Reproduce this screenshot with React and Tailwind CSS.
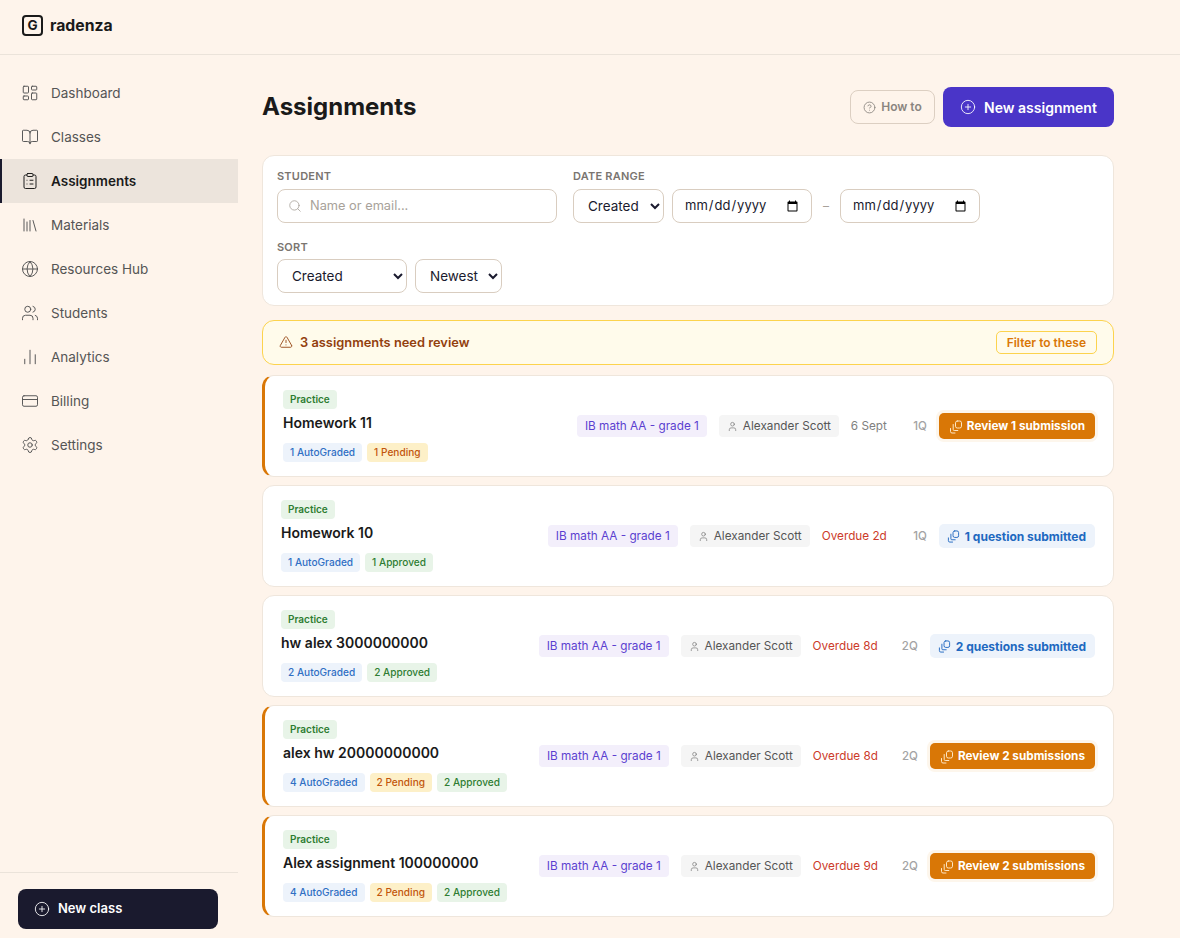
import React from 'react';
import {
  LayoutDashboard, BookOpen, ClipboardList, Library, Globe, Users, ChartNoAxesColumn,
  CreditCard, Settings, CirclePlus, CircleHelp, Search, TriangleAlert, User,
} from 'lucide-react';

const NAV = [
  ['Dashboard', LayoutDashboard],
  ['Classes', BookOpen],
  ['Assignments', ClipboardList],
  ['Materials', Library],
  ['Resources Hub', Globe],
  ['Students', Users],
  ['Analytics', ChartNoAxesColumn],
  ['Billing', CreditCard],
  ['Settings', Settings],
];

const ROWS = [
  { title: 'Homework 11', chips: [['1 AutoGraded', 'blue'], ['1 Pending', 'amber']], date: '6 Sept', overdue: false, q: '1Q', review: 'Review 1 submission' },
  { title: 'Homework 10', chips: [['1 AutoGraded', 'blue'], ['1 Approved', 'green']], date: 'Overdue 2d', overdue: true, q: '1Q', submitted: '1 question submitted' },
  { title: 'hw alex 3000000000', chips: [['2 AutoGraded', 'blue'], ['2 Approved', 'green']], date: 'Overdue 8d', overdue: true, q: '2Q', submitted: '2 questions submitted' },
  { title: 'alex hw 20000000000', chips: [['4 AutoGraded', 'blue'], ['2 Pending', 'amber'], ['2 Approved', 'green']], date: 'Overdue 8d', overdue: true, q: '2Q', review: 'Review 2 submissions' },
  { title: 'Alex assignment 100000000', chips: [['4 AutoGraded', 'blue'], ['2 Pending', 'amber'], ['2 Approved', 'green']], date: 'Overdue 9d', overdue: true, q: '2Q', review: 'Review 2 submissions' },
];

const CHIP = {
  blue: 'bg-[#edf3fb] text-[#2f6fc4]',
  amber: 'bg-[#fdf0c8] text-[#c2560c]',
  green: 'bg-[#e8f4e8] text-[#2e7d32]',
};

function SubmitIcon({ className }) {
  return (
    <svg viewBox="0 0 14 14" fill="none" stroke="currentColor" strokeWidth="1" strokeLinecap="round" strokeLinejoin="round" className={className}>
      <rect x="6.5" y="1" width="6" height="7" rx="1.8" />
      <path d="M4.2 4.5v5a1 1 0 0 0 1 1h3.6" />
      <path d="M1.5 8.5v3a1.5 1.5 0 0 0 1.5 1.5h3" />
    </svg>
  );
}

function Row({ row }) {
  return (
    <div className={`flex items-center justify-between bg-white rounded-xl border border-[#efe6dc] h-[102px] pl-[18px] pr-[18px] ${row.review ? 'border-l-[3px] border-l-[#d97706]' : ''}`}>
      <div>
        <span className="block w-fit rounded-[4px] bg-[#e8f4e8] text-[#2e7d32] text-[10px] font-semibold leading-[19px] px-[7px]">Practice</span>
        <div className="text-[14px] font-semibold text-[#1a1a1a] leading-[20px] mt-[4px]">{row.title}</div>
        <div className="flex gap-[5px] mt-[10px]">
          {row.chips.map(([label, tone]) => (
            <span key={label} className={`rounded-[4px] text-[10.1px] font-medium leading-[19px] px-[7px] ${CHIP[tone]}`}>{label}</span>
          ))}
        </div>
      </div>
      <div className="flex items-center gap-3">
        <span className="rounded-[4px] bg-[#f3effb] text-[#5b3fd0] text-[11.75px] leading-[22px] px-2">IB math AA - grade 1</span>
        <span className="flex items-center gap-[5px] rounded-[4px] bg-[#f5f5f5] text-[#555555] text-[11.75px] leading-[22px] px-2">
          <User size={11} strokeWidth={1.5} className="text-[#777777]" />
          Alexander Scott
        </span>
        <span className={`pt-px text-[11.75px] ${row.overdue ? 'text-[#cc3b2a]' : 'text-[#808080]'}`}>{row.date}</span>
        <span className="pt-px w-[28px] text-right text-[11.5px] font-medium text-[#a3a3a3]">{row.q}</span>
        {row.review ? (
          <button className="flex items-center gap-[4px] h-[26px] rounded-[5px] bg-[#d97706] text-white text-[11.75px] font-bold px-[10px] pt-px shadow-[0_0_0_3px_#fdf6ec]">
            <SubmitIcon className="size-[14px] text-[#fde6c4]" />
            {row.review}
          </button>
        ) : (
          <span className="flex items-center gap-[5px] h-[24px] rounded-[5px] bg-[#edf3fb] text-[#2068c0] text-[12px] font-bold pl-[8px] pr-[9px] pt-px">
            <SubmitIcon className="size-[13px]" />
            {row.submitted}
          </span>
        )}
      </div>
    </div>
  );
}

export default function App() {
  const field = 'h-[34px] rounded-lg border border-[#d9cdc0] bg-white text-[#1a1a2e]';
  return (
    <div className="h-[938px] overflow-hidden bg-[#fef4eb] flex flex-col font-['Inter',sans-serif]">
      <header className="h-[55px] shrink-0 border-b border-[#ebe3da] flex items-center pl-[22px] pb-[3px] gap-[7px]">
        <span className="size-[21px] flex items-center justify-center rounded-[4px] border-2 border-[#1a1a1a] text-[13.5px] font-bold text-[#1a1a1a]">G</span>
        <span className="text-[15.75px] font-bold text-[#1a1a1a]">radenza</span>
      </header>
      <div className="flex flex-1 min-h-0">
        <aside className="w-[238px] shrink-0 flex flex-col pt-4">
          <nav className="flex-1">
            {NAV.map(([label, Icon]) => {
              const active = label === 'Assignments';
              return (
                <div key={label} className={`relative h-[44px] flex items-center gap-[12px] pl-[21px] text-[13.5px] ${active ? 'bg-[#ece4dc] font-semibold text-[#1a1a1a]' : 'text-[#555555]'}`}>
                  {active && <span className="absolute left-0 inset-y-0 w-[2px] bg-[#1a1a2e]" />}
                  <Icon size={18} strokeWidth={1.3} />
                  {label}
                </div>
              );
            })}
          </nav>
          <div className="border-t border-[#ebe3da] h-[66px] pl-[18px] pt-4">
            <button className="w-[200px] h-[40px] flex items-center gap-2 rounded-lg bg-[#1a1a2e] text-white text-[13px] font-semibold pl-[16px]">
              <CirclePlus size={16} strokeWidth={1.3} />
              New class
            </button>
          </div>
        </aside>
        <main className="w-[852px] ml-[24px] pt-[32px]">
          <div className="flex items-center justify-between h-[40px]">
            <h1 className="text-[24px] font-bold text-[#1a1a1a]">Assignments</h1>
            <div className="flex items-center gap-2">
              <button className="h-[34px] w-[85px] flex items-center justify-center gap-[5px] rounded-lg border border-[#dccfc2] text-[12px] font-semibold text-[#8a8580]">
                <CircleHelp size={13} strokeWidth={1.6} />
                How to
              </button>
              <button className="h-[40px] w-[171px] flex items-center justify-center gap-[8px] rounded-lg bg-[#4a35c8] text-white text-[14px] font-semibold">
                <CirclePlus size={16} strokeWidth={1.3} />
                New assignment
              </button>
            </div>
          </div>

          <section className="mt-[28px] h-[151px] rounded-xl border border-[#efe6dc] bg-white pl-[14px] pt-[13px]">
            <div className="flex gap-4">
              <div>
                <div className="text-[11px] font-semibold text-[#7a7570] tracking-[0.02em] leading-[14px] mb-[6px]">STUDENT</div>
                <div className={`${field} w-[280px] flex items-center gap-[8px] pl-[10px]`}>
                  <Search size={14} strokeWidth={1.4} className="text-[#a8a29a]" />
                  <input placeholder="Name or email..." className="min-w-0 flex-1 outline-none text-[12.8px] placeholder:text-[#a8a29a]" />
                </div>
              </div>
              <div>
                <div className="text-[11px] font-semibold text-[#7a7570] tracking-[0.02em] leading-[14px] mb-[6px]">DATE RANGE</div>
                <div className="flex items-center gap-2">
                  <select className={`${field} text-[13.5px] w-[91px] pl-[10px]`}><option>Created</option></select>
                  <input type="date" className={`${field} text-[13px] w-[140px] pl-[11px] pr-[10px]`} />
                  <span className="w-[12px] text-center text-[12px] text-[#a8a29a]">–</span>
                  <input type="date" className={`${field} text-[13px] w-[140px] pl-[11px] pr-[10px]`} />
                </div>
              </div>
            </div>
            <div className="mt-[17px]">
              <div className="text-[11px] font-semibold text-[#7a7570] tracking-[0.02em] leading-[14px] mb-[5px]">SORT</div>
              <div className="flex gap-2">
                <select className={`${field} text-[13.5px] w-[130px] pl-[10px]`}><option>Created</option></select>
                <select className={`${field} text-[13.5px] w-[87px] pl-[10px]`}><option>Newest</option></select>
              </div>
            </div>
          </section>

          <div className="mt-[14px] h-[45px] flex items-center justify-between rounded-xl border border-[#fcd34d] bg-[#fffbeb] pl-[16px] pr-[16px]">
            <div className="flex items-center gap-[7px] text-[12.85px] font-semibold text-[#92400e]">
              <TriangleAlert size={14} strokeWidth={1.5} />
              3 assignments need review
            </div>
            <button className="h-[23px] px-[10px] rounded-[5px] border border-[#fcd34d] text-[12px] font-semibold text-[#d97706]">Filter to these</button>
          </div>

          <div className="mt-[10px] flex flex-col gap-2">
            {ROWS.map(row => <Row key={row.title} row={row} />)}
          </div>
        </main>
      </div>
    </div>
  );
}
